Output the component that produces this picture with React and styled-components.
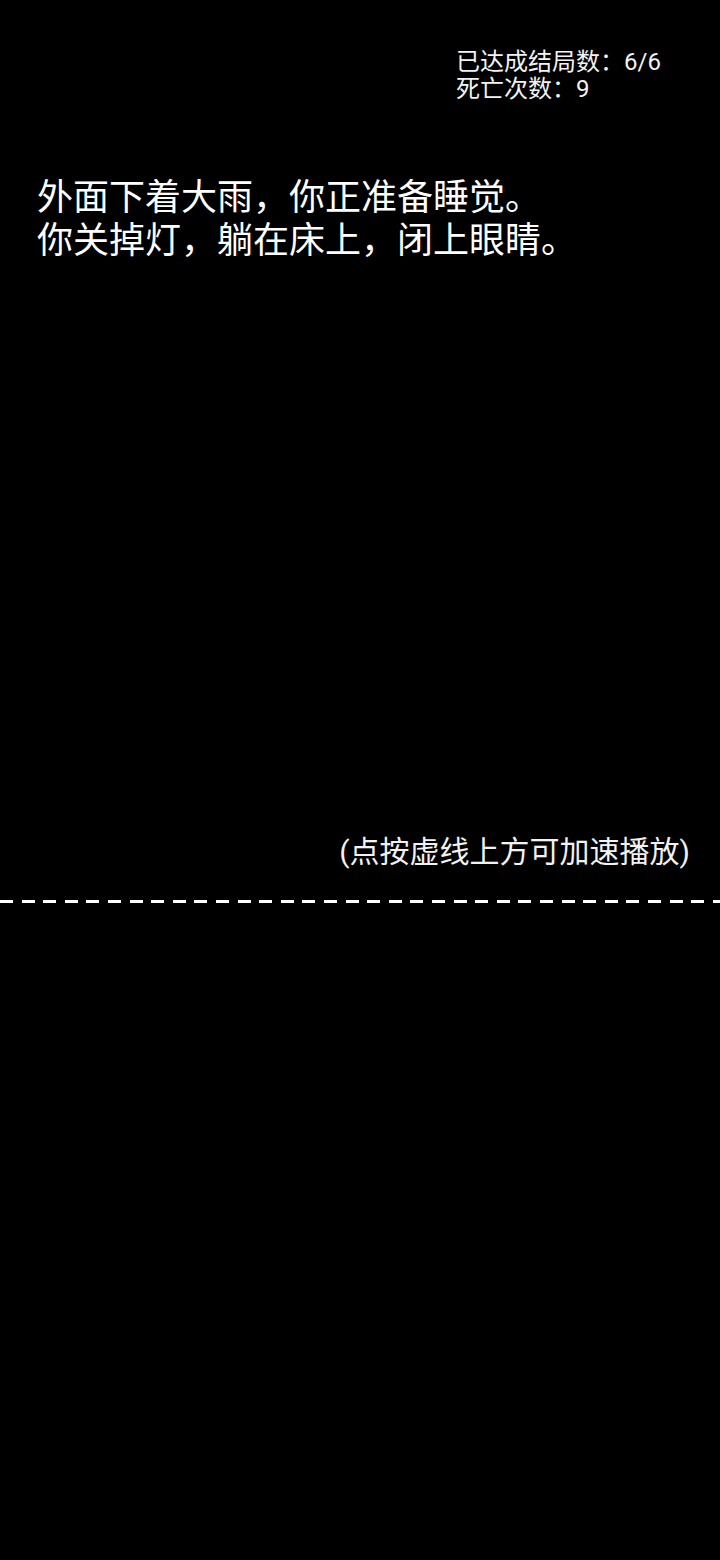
import React from 'react'
import styled, { createGlobalStyle } from 'styled-components'

const GlobalStyle = createGlobalStyle`
    html, body {
        margin: 0;
        padding: 0;
        background: #000;
    }
    body {
        font-family: Roboto, 'Noto Sans CJK SC', sans-serif;
        color: #fff;
    }
`

const Screen = styled.div`
    width: 720px;
    height: 1560px;
    background: #000;
    display: flex;
    flex-direction: column;
`

const Stage = styled.div`
    height: 900px;
    display: flex;
    flex-direction: column;
`

const Stats = styled.div`
    display: flex;
    justify-content: flex-end;
    padding: 49px 59px 0 0;
`

const StatList = styled.div`
    font-size: 24px;
    line-height: 27px;
    color: #f2f2f2;
`

const Story = styled.div`
    padding: 74px 0 0 37px;
    font-size: 36px;
    line-height: 43px;
    color: #fff;
`

const Hint = styled.div`
    margin-top: auto;
    padding: 0 30px 28px 0;
    text-align: right;
    font-size: 30px;
    line-height: 40px;
    color: #f2f2f2;
`

const Divider = styled.div`
    height: 3px;
    background: repeating-linear-gradient(to right, #fff 0 13px, transparent 13px 21.6px);
`

const Below = styled.div`
    flex: 1;
`

const stats = [
    { label: '已达成结局数', value: '6/6' },
    { label: '死亡次数', value: '9' },
]

const lines = [
    '外面下着大雨，你正准备睡觉。',
    '你关掉灯，躺在床上，闭上眼睛。',
]

function App() {
    return (
        <>
            <GlobalStyle />
            <Screen>
                <Stage>
                    <Stats>
                        <StatList>
                            {stats.map(s => (
                                <div key={s.label}>{s.label}：{s.value}</div>
                            ))}
                        </StatList>
                    </Stats>
                    <Story>
                        {lines.map(l => <div key={l}>{l}</div>)}
                    </Story>
                    <Hint>(点按虚线上方可加速播放)</Hint>
                </Stage>
                <Divider />
                <Below />
            </Screen>
        </>
    )
}

export default App
